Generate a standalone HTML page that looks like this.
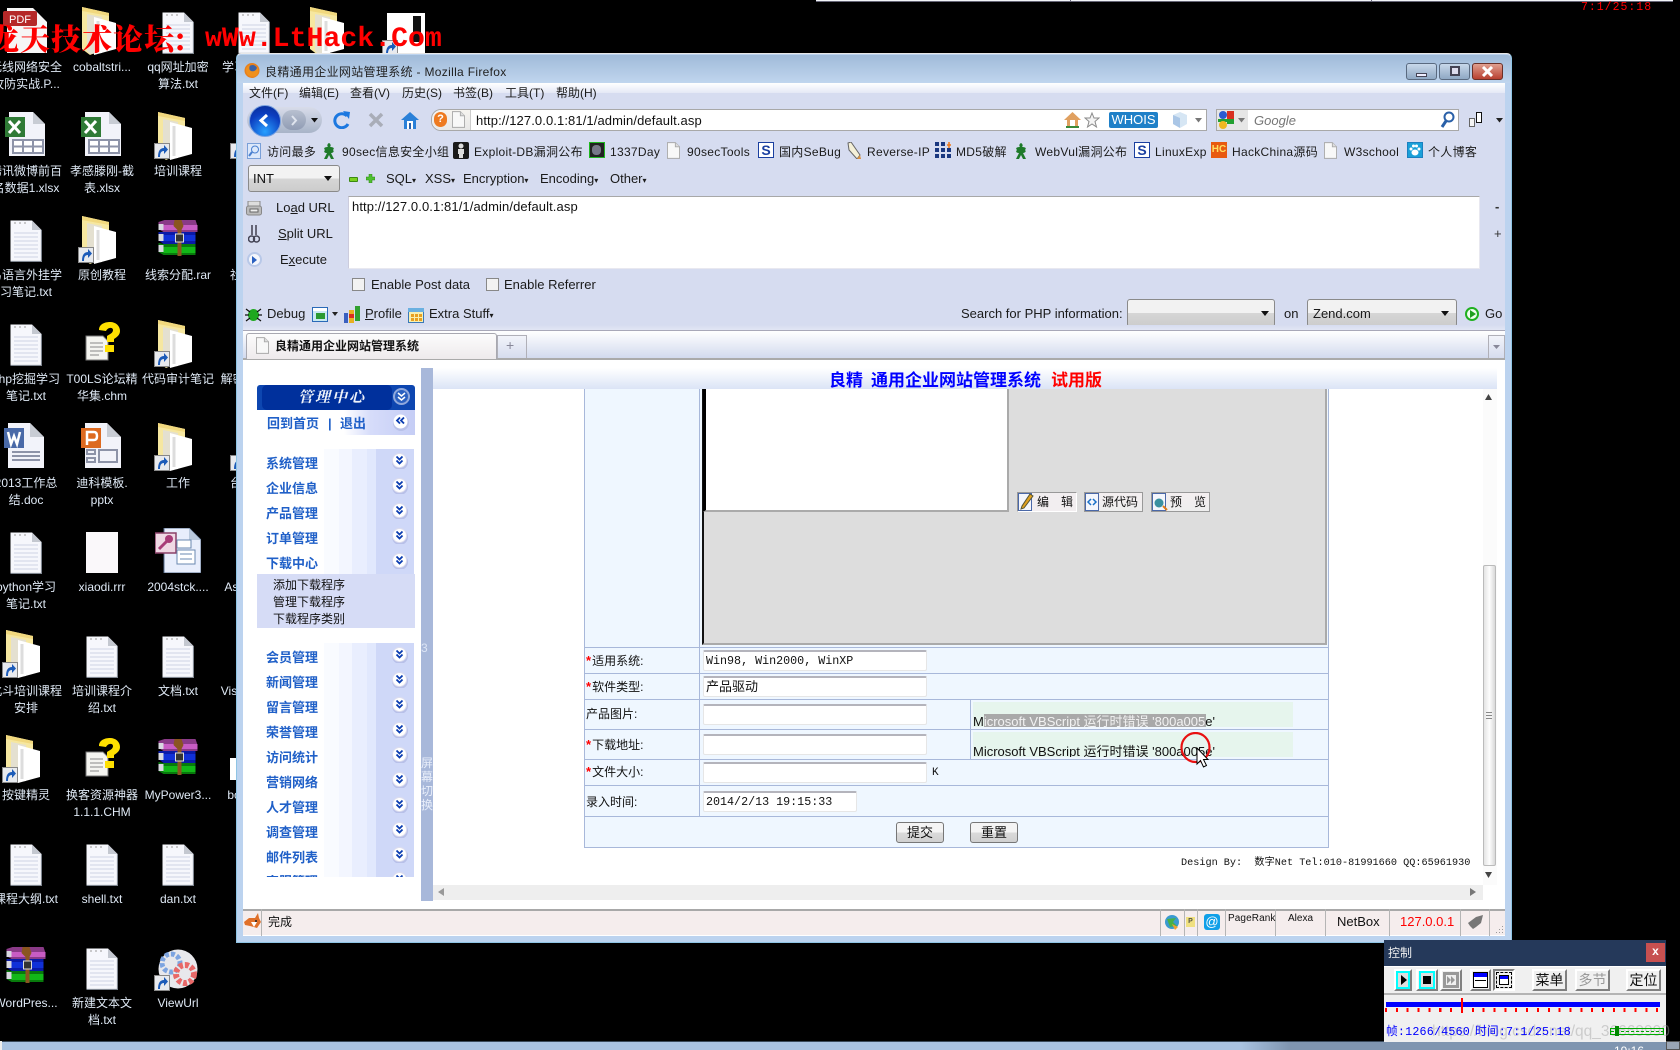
<!DOCTYPE html>
<html><head><meta charset="utf-8"><title>良精通用企业网站管理系统</title>
<style>
*{box-sizing:border-box}
html,body{margin:0;padding:0;background:#000;width:1680px;height:1050px;overflow:hidden}
body{position:relative;font-family:"Liberation Sans","Noto Sans CJK SC",sans-serif;font-size:12px;color:#111}
.a,.t,.i,.l{position:absolute}
.t{white-space:nowrap;line-height:16px}
.l{white-space:nowrap;text-align:center;width:120px;margin-left:-60px;margin-top:1px;line-height:17px;color:#dfe9f5}
.ui{letter-spacing:.3px;color:#1a1a1a}
.m{font-family:"Liberation Mono","Noto Sans CJK SC",monospace}
.side{font-weight:700;font-size:13px;color:#2060c8;line-height:16px;left:266px;margin-top:1px}
.sub{left:273px;line-height:16px;color:#111;margin-top:1px}
.lab{left:586px;line-height:16px;color:#111;margin-top:1px}
.lab b{color:#f00;font-weight:700;font-size:13px;margin-right:1px}
.in{position:absolute;left:703px;width:224px;height:21px;background:#fff;border:1px solid #e6e6e6;border-top:2px solid #b4b4bc;border-radius:2px}
.sel{position:absolute;background:linear-gradient(#f2f2f2 50%,#d6d6d6 50%,#ccc);border:1px solid #8a8a8a;border-radius:3px}
.btn{position:absolute;background:linear-gradient(#f4f4f4 50%,#dadada 50%,#d0d0d0);border:1px solid #777;border-radius:3px;text-align:center;font-size:13px;line-height:19px;color:#111}
.ed{position:absolute;top:492px;height:20px;background:linear-gradient(#f4eff0,#eee);border:1px solid #999;font-size:12px;line-height:19px;color:#111;white-space:pre}
.sep{position:absolute;top:909px;height:27px;width:1px;background:#b5b5b5}
.cb{position:absolute;top:969px;height:22px;background:#f0f0f0;border:2px solid;border-color:#fff #808080 #808080 #fff;text-align:center;font-size:14px;line-height:18px;color:#111}
</style></head><body>

<svg width="0" height="0" style="position:absolute"><defs>
<symbol id="txt" viewBox="0 0 32 42"><path d="M.5.5H22L31.5 10V41.5H.5Z" fill="#f6f7fc"/><path d="M22 .5V10h9.5Z" fill="#c4c8d0"/><path d="M4 13h24M4 17h24M4 21h24M4 25h24M4 29h24M4 33h24M4 37h24" stroke="#cdd3e4"/><path d="M4 3h14" stroke="#999" stroke-dasharray="2 3"/><path d="M.5 41.5H31.5V10" fill="none" stroke="#7f8690" stroke-width="1.2"/></symbol>
<symbol id="fol" viewBox="0 0 34 48"><path d="M0 0L27 6V40L8 48L0 42Z" fill="#f6e7a0"/><path d="M0 0L27 6V9L0 4Z" fill="#f1d87e"/><path d="M5 7L20 10V46L8 47L5 44Z" fill="#e4e0d0"/><path d="M12 10L34 16V42L12 48Z" fill="#fff"/><path d="M16 14V44" stroke="#ddd" stroke-width="3"/></symbol>
<symbol id="sc" viewBox="0 0 16 16"><rect x=".5" y=".5" width="15" height="15" fill="#e8eaee" stroke="#888"/><path d="M4 14C4 8 6 5 10 5V2L14 6.500L10 11V8C7 8 6 10 6 14Z" fill="#1c5bb8"/></symbol>
<symbol id="rar" viewBox="0 0 40 36"><path d="M1 2L7 0H38L40 6V12H6L1 9Z" fill="#8a3a88"/><path d="M6 5H40V10H6Z" fill="#c85cc4"/><path d="M1 12L6 12H38V24H6L1 20Z" fill="#0a1aa8"/><path d="M6 15H38V21H6Z" fill="#1030d8"/><path d="M1 23L6 24H38V35H6L1 32Z" fill="#087a0c"/><path d="M6 27H38V33H6Z" fill="#12b818"/><path d="M1 4H6V10H1ZM1 14H6V21H1ZM1 25H6V32H1Z" fill="#d8d8e0"/><path d="M17 0H24L26 6L24 10V36H20V10L16 6Z" fill="#8a5520"/><rect x="18" y="14" width="8" height="8" fill="#333" stroke="#ddd"/></symbol>
<symbol id="xls" viewBox="0 0 40 44"><path d="M4 0H28L40 12V44H4Z" fill="#f2f3fa"/><path d="M28 0V12H40Z" fill="#c8ccd4"/><rect x="0" y="5" width="20" height="20" fill="#2f7a36"/><path d="M4 9L15 21M15 9L4 21" stroke="#fff" stroke-width="3"/><path d="M8 28H38V41H8Z" fill="#fff" stroke="#8d93a8" stroke-width="2"/><path d="M8 34.500H38M18 28V41M28 28V41" stroke="#8d93a8" stroke-width="2"/></symbol>
<symbol id="chm" viewBox="0 0 35 39"><path d="M1 14H18L23 19V38H1Z" fill="#f4f4f0" stroke="#777"/><path d="M5 21H18M5 25H18M5 29H18M5 33H14" stroke="#888"/><path d="M14 8C14 2 20 0 25 0C31 0 35 4 35 9C35 13 32 15 29 17V20H22V14C25 12 28 11 28 8C28 5 23 5 21 9Z" fill="#ffe000"/><rect x="20" y="23" width="9" height="7" fill="#ffe000"/></symbol>
<symbol id="doc" viewBox="0 0 40 45"><path d="M4 0H26L40 14V45H4Z" fill="#f2f3fa"/><path d="M26 0V14H40Z" fill="#c8ccd4"/><rect y="5" width="20" height="20" fill="#4a6aa8"/><path d="M4 9L7 21L10 13L13 21L16 9" fill="none" stroke="#fff" stroke-width="2.500"/><path d="M8 29H36M8 33H36M8 37H36" stroke="#8d93a8" stroke-width="2"/></symbol>
<symbol id="ppt" viewBox="0 0 40 45"><path d="M4 0H26L40 14V45H4Z" fill="#f2f3fa"/><path d="M26 0V14H40Z" fill="#c8ccd4"/><rect y="5" width="20" height="20" fill="#dd6a20"/><path d="M6 22V9H13Q16 9 16 13T13 17H6" fill="none" stroke="#fff" stroke-width="2.500"/><path d="M6 27H14V31H6ZM6 35H14V39H6ZM18 27H36V39H18Z" fill="none" stroke="#8d93a8" stroke-width="2"/></symbol>
<symbol id="mdb" viewBox="0 0 46 45"><path d="M9 0H34L46 12V45H9Z" fill="#e8eefc" stroke="#5a7090"/><path d="M34 0V12H46Z" fill="#b8c8dc"/><rect x="0" y="5" width="21" height="20" fill="#efd8e4" stroke="#8a4068" stroke-width="1.500"/><circle cx="14" cy="11" r="4" fill="#a83c78"/><path d="M12 13L4 21" stroke="#a83c78" stroke-width="3"/><path d="M22 12H36V20H22ZM22 22H40V36H22Z" fill="#fff" stroke="#6a88b0"/><path d="M25 26H37M25 31H37" stroke="#6a88b0"/></symbol>
<symbol id="view" viewBox="0 0 40 44"><circle cx="20" cy="22" r="19.500" fill="#e8e8ec"/><circle cx="13" cy="16" r="9" fill="none" stroke="#7da4e0" stroke-width="5" stroke-dasharray="4 2"/><circle cx="27" cy="27" r="9" fill="none" stroke="#e86868" stroke-width="6" stroke-dasharray="4 2"/></symbol>
<symbol id="chev" viewBox="0 -1 17 17" overflow="visible"><circle cx="8" cy="9" r="8" fill="#b8c0e8"/><circle cx="7.500" cy="7.500" r="7" fill="#fff" stroke="#dde"/><path d="M4.500 3.500L7.500 6.500L10.500 3.500M4.500 7.500L7.500 10.500L10.500 7.500" fill="none" stroke="#0a3cb0" stroke-width="1.800"/></symbol>
<symbol id="gf" viewBox="0 0 14 16"><path d="M7 0C9 1 9 3 8 4C11 4 13 5 11 7C13 9 10 10 9 10C10 12 11 14 12 16H9L7 12L5 16H2C3 14 4 12 5 10C3 10 1 9 3 7C1 5 3 4 6 4C5 3 5 1 7 0Z" fill="#1e7a2a"/></symbol>
<symbol id="pg" viewBox="0 0 14 18"><path d="M.5.5H9L13.500 5V17.500H.5Z" fill="#f8f8f8" stroke="#aaa"/><path d="M9 .5V5H13.500" fill="#ddd" stroke="#aaa"/></symbol>
<symbol id="ss" viewBox="0 0 16 16"><rect x=".5" y=".5" width="15" height="15" fill="#fff" stroke="#1a3fa0"/></symbol>
</defs></svg>

<!-- top strip -->
<div class="a" style="left:816px;top:0;width:857px;height:2px;background:#f2f4f8;border-bottom:1px solid #667"></div>
<div class="a" style="left:1070px;top:0;width:1px;height:2px;background:#667"></div>
<div class="a" style="left:1371px;top:0;width:1px;height:2px;background:#667"></div>
<div class="t m" style="left:1581px;top:0;color:#f00;font-size:11.500px;letter-spacing:1px">7:1/25:18</div>

<!-- desktop icons -->
<svg class="i" style="left:3px;top:8px" width="44" height="45" viewBox="0 0 44 45"><path d="M4 0H30L44 14V45H4Z" fill="#f6f6f6"/><rect x="0" y="3" width="34" height="15" rx="2" fill="#b52828"/><text x="17" y="15" font-size="11" fill="#fff" text-anchor="middle" font-family="Liberation Sans">PDF</text></svg>
<svg class="i" style="left:82px;top:7px" width="34" height="48"><use href="#fol"/></svg>
<svg class="i" style="left:162px;top:12px" width="32" height="42"><use href="#txt"/></svg>
<svg class="i" style="left:238px;top:12px" width="32" height="42"><use href="#txt"/></svg>
<svg class="i" style="left:310px;top:7px" width="34" height="48"><use href="#fol"/></svg>
<div class="a" style="left:387px;top:13px;width:38px;height:40px;background:#fff"></div>
<div class="a" style="left:413px;top:16px;width:8px;height:26px;background:#111"></div>
<svg class="i" style="left:382px;top:40px" width="16" height="16"><use href="#sc"/></svg>

<svg class="i" style="left:5px;top:112px" width="40" height="44"><use href="#xls"/></svg>
<svg class="i" style="left:81px;top:112px" width="40" height="44"><use href="#xls"/></svg>
<svg class="i" style="left:158px;top:112px" width="34" height="48"><use href="#fol"/></svg>
<svg class="i" style="left:154px;top:143px" width="16" height="16"><use href="#sc"/></svg>
<svg class="i" style="left:230px;top:143px" width="16" height="16"><use href="#sc"/></svg>

<svg class="i" style="left:10px;top:220px" width="32" height="42"><use href="#txt"/></svg>
<svg class="i" style="left:82px;top:216px" width="34" height="48"><use href="#fol"/></svg>
<svg class="i" style="left:78px;top:247px" width="16" height="16"><use href="#sc"/></svg>
<svg class="i" style="left:157px;top:220px" width="41" height="36"><use href="#rar"/></svg>

<svg class="i" style="left:10px;top:324px" width="32" height="42"><use href="#txt"/></svg>
<svg class="i" style="left:85px;top:322px" width="35" height="39"><use href="#chm"/></svg>
<svg class="i" style="left:158px;top:320px" width="34" height="48"><use href="#fol"/></svg>
<svg class="i" style="left:154px;top:351px" width="16" height="16"><use href="#sc"/></svg>

<svg class="i" style="left:4px;top:423px" width="40" height="45"><use href="#doc"/></svg>
<svg class="i" style="left:81px;top:423px" width="40" height="45"><use href="#ppt"/></svg>
<svg class="i" style="left:158px;top:423px" width="34" height="48"><use href="#fol"/></svg>
<svg class="i" style="left:154px;top:455px" width="16" height="16"><use href="#sc"/></svg>
<svg class="i" style="left:230px;top:455px" width="16" height="16"><use href="#sc"/></svg>

<svg class="i" style="left:10px;top:532px" width="32" height="42"><use href="#txt"/></svg>
<div class="a" style="left:86px;top:532px;width:32px;height:41px;background:#faf8fa"></div>
<svg class="i" style="left:155px;top:528px" width="46" height="45"><use href="#mdb"/></svg>

<svg class="i" style="left:6px;top:630px" width="34" height="48"><use href="#fol"/></svg>
<svg class="i" style="left:2px;top:662px" width="16" height="16"><use href="#sc"/></svg>
<svg class="i" style="left:86px;top:636px" width="32" height="42"><use href="#txt"/></svg>
<svg class="i" style="left:162px;top:636px" width="32" height="42"><use href="#txt"/></svg>

<svg class="i" style="left:6px;top:735px" width="34" height="48"><use href="#fol"/></svg>
<svg class="i" style="left:2px;top:767px" width="16" height="16"><use href="#sc"/></svg>
<svg class="i" style="left:85px;top:738px" width="35" height="39"><use href="#chm"/></svg>
<svg class="i" style="left:157px;top:739px" width="41" height="36"><use href="#rar"/></svg>
<div class="a" style="left:230px;top:758px;width:6px;height:22px;background:#fff"></div>

<svg class="i" style="left:10px;top:844px" width="32" height="42"><use href="#txt"/></svg>
<svg class="i" style="left:86px;top:844px" width="32" height="42"><use href="#txt"/></svg>
<svg class="i" style="left:162px;top:844px" width="32" height="42"><use href="#txt"/></svg>

<svg class="i" style="left:5px;top:947px" width="41" height="36"><use href="#rar"/></svg>
<svg class="i" style="left:86px;top:948px" width="32" height="42"><use href="#txt"/></svg>
<svg class="i" style="left:158px;top:947px" width="40" height="44"><use href="#view"/></svg>
<svg class="i" style="left:154px;top:975px" width="16" height="16"><use href="#sc"/></svg>

<!-- desktop labels -->
<div class="l" style="left:26px;top:58px">无线网络安全<br>攻防实战.P...</div>
<div class="l" style="left:102px;top:58px">cobaltstri...</div>
<div class="l" style="left:178px;top:58px">qq网址加密<br>算法.txt</div>
<div class="l" style="left:254px;top:58px">学习资料.txt</div>
<div class="l" style="left:26px;top:162px">腾讯微博前百<br>名数据1.xlsx</div>
<div class="l" style="left:102px;top:162px">孝感滕刚-截<br>表.xlsx</div>
<div class="l" style="left:178px;top:162px">培训课程</div>
<div class="l" style="left:26px;top:266px">易语言外挂学<br>习笔记.txt</div>
<div class="l" style="left:102px;top:266px">原创教程</div>
<div class="l" style="left:178px;top:266px">线索分配.rar</div>
<div class="l" style="left:254px;top:266px">社工工具</div>
<div class="l" style="left:26px;top:370px">php挖掘学习<br>笔记.txt</div>
<div class="l" style="left:102px;top:370px">T00LS论坛精<br>华集.chm</div>
<div class="l" style="left:178px;top:370px">代码审计笔记</div>
<div class="l" style="left:254px;top:370px">解密工具书..</div>
<div class="l" style="left:26px;top:474px">2013工作总<br>结.doc</div>
<div class="l" style="left:102px;top:474px">迪科模板.<br>pptx</div>
<div class="l" style="left:178px;top:474px">工作</div>
<div class="l" style="left:254px;top:474px">台账资料</div>
<div class="l" style="left:26px;top:578px">python学习<br>笔记.txt</div>
<div class="l" style="left:102px;top:578px">xiaodi.rrr</div>
<div class="l" style="left:178px;top:578px">2004stck....</div>
<div class="l" style="left:254px;top:578px">Astrology...</div>
<div class="l" style="left:26px;top:682px">北斗培训课程<br>安排</div>
<div class="l" style="left:102px;top:682px">培训课程介<br>绍.txt</div>
<div class="l" style="left:178px;top:682px">文档.txt</div>
<div class="l" style="left:254px;top:682px">VisualStudio</div>
<div class="l" style="left:26px;top:786px">按键精灵</div>
<div class="l" style="left:102px;top:786px">换客资源神器<br>1.1.1.CHM</div>
<div class="l" style="left:178px;top:786px">MyPower3...</div>
<div class="l" style="left:254px;top:786px">bootmgr...</div>
<div class="l" style="left:26px;top:890px">课程大纲.txt</div>
<div class="l" style="left:102px;top:890px">shell.txt</div>
<div class="l" style="left:178px;top:890px">dan.txt</div>
<div class="l" style="left:26px;top:994px">WordPres...</div>
<div class="l" style="left:102px;top:994px">新建文本文<br>档.txt</div>
<div class="l" style="left:178px;top:994px">ViewUrl</div>

<!-- red overlay -->
<div class="t" style="left:-11px;top:19px;font-family:'Noto Serif CJK SC',serif;font-weight:900;font-size:30px;line-height:36px;letter-spacing:1px;color:#f00;z-index:5">龙天技术论坛:</div>
<div class="t" style="left:205px;top:20px;font-family:'Liberation Mono',monospace;font-weight:700;font-size:28.200px;line-height:40px;color:#f00;z-index:5">wWw.LtHack.Com</div>

<!-- ===== FIREFOX WINDOW ===== -->
<div class="a" style="left:236px;top:53px;width:1276px;height:890px;background:#bcd3ef;border:1px solid #8fc4e4;border-top-color:#e8e8e8;border-radius:5px 5px 0 0"></div>
<div class="a" style="left:237px;top:55px;width:1274px;height:28px;background:linear-gradient(#a0bbd9,#c0d5ee);border-radius:4px 4px 0 0"></div>
<svg class="i" style="left:244px;top:62px" width="16" height="17" viewBox="0 0 16 17"><circle cx="8" cy="8.500" r="7.500" fill="#e8801c"/><circle cx="8.500" cy="8" r="5" fill="#3a62a8"/><path d="M2 8C2 14 8 16 12 14C15 12 15 8 13 5C13 8 10 10 7 9C5 8 5 6 6 3C3 4 2 6 2 8Z" fill="#f0901c"/></svg>
<div class="t" style="left:265px;top:64px;font-size:12px;letter-spacing:.32px;color:#222">良精通用企业网站管理系统 - Mozilla Firefox</div>
<!-- win buttons -->
<div class="a" style="left:1406px;top:63px;width:31px;height:17px;background:linear-gradient(#c8d8ea,#8fa8c4);border:1px solid #5a6a80;border-radius:3px"></div>
<div class="a" style="left:1416px;top:73px;width:11px;height:4px;background:#eef;border:1px solid #445"></div>
<div class="a" style="left:1439px;top:63px;width:31px;height:17px;background:linear-gradient(#c8d8ea,#8fa8c4);border:1px solid #5a6a80;border-radius:3px"></div>
<div class="a" style="left:1450px;top:66px;width:10px;height:10px;background:#dde;border:2px solid #445"></div>
<div class="a" style="left:1472px;top:63px;width:31px;height:17px;background:linear-gradient(#e0a090,#b84030);border:1px solid #6a3028;border-radius:3px"></div>
<svg class="i" style="left:1481px;top:66px" width="13" height="11"><path d="M2 1L11 10M11 1L2 10" stroke="#fff" stroke-width="3"/></svg>

<!-- chrome body -->
<div class="a" style="left:243px;top:83px;width:1262px;height:247px;background:#d6dcf0"></div>
<div class="a" style="left:243px;top:83px;width:1262px;height:10px;background:linear-gradient(#fff,#e4e8f6)"></div>
<div class="t" style="left:249px;top:85px;color:#1a1a1a">文件(F)</div>
<div class="t" style="left:299px;top:85px;color:#1a1a1a">编辑(E)</div>
<div class="t" style="left:350px;top:85px;color:#1a1a1a">查看(V)</div>
<div class="t" style="left:402px;top:85px;color:#1a1a1a">历史(S)</div>
<div class="t" style="left:453px;top:85px;color:#1a1a1a">书签(B)</div>
<div class="t" style="left:505px;top:85px;color:#1a1a1a">工具(T)</div>
<div class="t" style="left:556px;top:85px;color:#1a1a1a">帮助(H)</div>

<!-- nav -->
<div class="a" style="left:247px;top:107px;width:75px;height:26px;background:linear-gradient(#d8dcea,#a8b4c8);border-radius:13px"></div>
<div class="a" style="left:282px;top:110px;width:24px;height:20px;background:linear-gradient(#b8c0d0,#909cb4);border-radius:10px"></div>
<div class="a" style="left:249px;top:105px;width:32px;height:32px;border-radius:50%;background:radial-gradient(circle at 50% 85%,#28a0ff,#0c3ec0 60%,#082a90);border:1px solid #7aa2e0"></div>
<svg class="i" style="left:257px;top:113px" width="15" height="15"><path d="M10 2L4 7.500L10 13" fill="none" stroke="#fff" stroke-width="3"/></svg>
<svg class="i" style="left:289px;top:114px" width="10" height="13"><path d="M3 2L7 6.500L3 11" fill="none" stroke="#dfe4ee" stroke-width="2"/></svg>
<svg class="i" style="left:311px;top:118px" width="7" height="5"><path d="M0 0H7L3.500 4.500Z" fill="#111"/></svg>
<svg class="i" style="left:333px;top:111px" width="18" height="18" viewBox="0 0 18 18"><path d="M14 5A7 7 0 1 0 15 13" fill="none" stroke="#1c78e0" stroke-width="3"/><path d="M10 0L17 1L16 8Z" fill="#1c78e0"/></svg>
<svg class="i" style="left:368px;top:112px" width="16" height="16"><path d="M2 2L14 14M14 2L2 14" stroke="#a9adb8" stroke-width="3.500"/></svg>
<svg class="i" style="left:401px;top:112px" width="18" height="17" viewBox="0 0 18 17"><path d="M9 0L18 8H15V17H3V8H0Z" fill="#2a80d8"/><rect x="6" y="9" width="6" height="8" fill="#fff"/><rect x="8" y="11" width="2" height="6" fill="#2a60a8"/></svg>
<div class="a" style="left:431px;top:109px;width:776px;height:22px;background:#fff;border:1px solid #a8a8a8;border-radius:10px 0 0 10px"></div>
<div class="a" style="left:432px;top:110px;width:39px;height:20px;background:linear-gradient(#f6f4f0,#e8e8e8);border-radius:10px 0 0 10px;border-right:1px solid #ccc"></div>
<div class="t" style="left:434px;top:112px;width:13px;height:15px;line-height:15px;background:#ee7a20;border-radius:7px;color:#fff;font-weight:700;font-size:11px;text-align:center">?</div>
<svg class="i" style="left:452px;top:111px" width="13" height="17"><use href="#pg"/></svg>
<div class="t" style="left:476px;top:113px;font-size:13px;letter-spacing:.1px;color:#111">http://127.0.0.1:81/1/admin/default.asp</div>
<svg class="i" style="left:1064px;top:112px" width="17" height="16" viewBox="0 0 17 16"><path d="M8.500 0L17 8H14V15H3V8H0Z" fill="#e0a060"/><rect x="6" y="8" width="5" height="7" fill="#fff"/><rect x="2" y="14" width="13" height="2" fill="#3a8a3a"/></svg>
<svg class="i" style="left:1084px;top:112px" width="16" height="16" viewBox="0 0 16 16"><path d="M8 1L10 6H15L11 9.500L12.500 15L8 12L3.500 15L5 9.500L1 6H6Z" fill="#f4f4f4" stroke="#8a8a8a"/></svg>
<div class="t" style="left:1109px;top:112px;width:49px;height:16px;background:#1f80c8;color:#fff;border-radius:2px;text-align:center;font-weight:400;font-size:13px;line-height:16px">WHOIS</div>
<svg class="i" style="left:1173px;top:112px" width="14" height="16" viewBox="0 0 14 16"><path d="M7 0L14 3V12L7 16L0 12V3Z" fill="#d6e6f4"/><path d="M0 3L7 6V16L0 12Z" fill="#aac6e6"/></svg>
<svg class="i" style="left:1195px;top:118px" width="7" height="5"><path d="M0 0H7L3.500 4.500Z" fill="#777"/></svg>

<div class="a" style="left:1216px;top:109px;width:243px;height:22px;background:#fff;border:1px solid #a8a8a8"></div>
<div class="a" style="left:1217px;top:110px;width:31px;height:20px;background:#e6e6e6"></div>
<svg class="i" style="left:1218px;top:111px" width="17" height="18" viewBox="0 0 17 18"><rect width="17" height="18" rx="2" fill="#e6e6e6"/><circle cx="5" cy="4" r="4" fill="#2a5ad0"/><path d="M9 0H16V9H9Z" fill="#d83020"/><path d="M0 8H9V11H0ZM9 8H16V13H9Z" fill="#22a030"/><circle cx="5" cy="14" r="4" fill="#f0b820"/></svg>
<svg class="i" style="left:1238px;top:118px" width="7" height="5"><path d="M0 0H7L3.500 4.500Z" fill="#777"/></svg>
<div class="t" style="left:1254px;top:113px;font-size:13px;font-style:italic;color:#777">Google</div>
<svg class="i" style="left:1440px;top:111px" width="15" height="18" viewBox="0 0 15 18"><circle cx="9" cy="6" r="4.500" fill="none" stroke="#2a60a8" stroke-width="2"/><path d="M6 10L2 16" stroke="#2a60a8" stroke-width="3"/></svg>
<svg class="i" style="left:1469px;top:112px" width="15" height="15"><rect x=".5" y="6.500" width="5" height="8" fill="#f4f4f4" stroke="#666"/><rect x="7.500" y=".5" width="5" height="10" fill="#fff" stroke="#111"/></svg>
<svg class="i" style="left:1496px;top:118px" width="7" height="5"><path d="M0 0H7L3.500 4.500Z" fill="#222"/></svg>

<!-- bookmarks -->
<svg class="i" style="left:247px;top:143px" width="14" height="16"><rect x=".5" y=".5" width="13" height="15" fill="#dce8fa" stroke="#7aa0d8"/><circle cx="8" cy="6.500" r="3.500" fill="none" stroke="#4a80d0"/><path d="M5 9L2 13" stroke="#4a80d0" stroke-width="2"/></svg>
<div class="t ui" style="left:267px;top:144px">访问最多</div>
<svg class="i" style="left:322px;top:143px" width="14" height="16"><use href="#gf"/></svg>
<div class="t ui" style="left:342px;top:144px">90sec信息安全小组</div>
<div class="a" style="left:453px;top:142px;width:16px;height:17px;background:#1a1a1a;border-radius:2px"></div>
<svg class="i" style="left:455px;top:143px" width="12" height="15"><circle cx="6" cy="3" r="2.500" fill="#ddd"/><path d="M3 6H9V11H8V15H4V11H3Z" fill="#ddd"/></svg>
<div class="t ui" style="left:474px;top:144px">Exploit-DB漏洞公布</div>
<div class="a" style="left:589px;top:142px;width:16px;height:16px;background:#222;border:1px solid #1fb81f"></div>
<div class="a" style="left:592px;top:145px;width:9px;height:10px;background:#778;border-radius:4px"></div>
<div class="t ui" style="left:610px;top:144px">1337Day</div>
<svg class="i" style="left:667px;top:142px" width="13" height="17"><use href="#pg"/></svg>
<div class="t ui" style="left:687px;top:144px">90secTools</div>
<svg class="i" style="left:758px;top:142px" width="16" height="16"><use href="#ss"/></svg>
<div class="t" style="left:758px;top:142px;width:16px;text-align:center;font-weight:700;font-size:14px;color:#1a3fa0">S</div>
<div class="t ui" style="left:779px;top:144px">国内SeBug</div>
<svg class="i" style="left:846px;top:142px" width="15" height="17" viewBox="0 0 15 17"><path d="M2 1L5 0L14 13L11 17L3 8Z" fill="#f4f0d8" stroke="#666"/><path d="M11 17L14 13L15 17Z" fill="#d89040"/></svg>
<div class="t ui" style="left:867px;top:144px">Reverse-IP</div>
<svg class="i" style="left:935px;top:142px" width="16" height="16" viewBox="0 0 16 16"><path d="M0 0h4v4H0zM6 0h4v4H6zM0 6h4v4H0zM6 6h4v4H6zM12 6h4v4h-4zM0 12h4v4H0zM6 12h4v4H6zM12 12h4v4h-4z" fill="#1a3880"/><path d="M12 3h4M14 0v6" stroke="#f07a18" stroke-width="1.500"/></svg>
<div class="t ui" style="left:956px;top:144px">MD5破解</div>
<svg class="i" style="left:1014px;top:143px" width="14" height="16"><use href="#gf"/></svg>
<div class="t ui" style="left:1035px;top:144px">WebVul漏洞公布</div>
<svg class="i" style="left:1134px;top:142px" width="16" height="16"><use href="#ss"/></svg>
<div class="t" style="left:1134px;top:142px;width:16px;text-align:center;font-weight:700;font-size:14px;color:#1a3fa0">S</div>
<div class="t ui" style="left:1155px;top:144px">LinuxExp</div>
<div class="t" style="left:1211px;top:142px;width:16px;height:16px;background:#e85a10;color:#ffe060;font-weight:700;font-size:10px;text-align:center">HC</div>
<div class="t ui" style="left:1232px;top:144px">HackChina源码</div>
<svg class="i" style="left:1324px;top:142px" width="13" height="17"><use href="#pg"/></svg>
<div class="t ui" style="left:1344px;top:144px">W3school</div>
<div class="a" style="left:1407px;top:142px;width:16px;height:16px;background:#1aa0d8;border:1px solid #1a80c0"></div>
<svg class="i" style="left:1409px;top:144px" width="12" height="12" viewBox="0 0 12 12"><ellipse cx="6" cy="8.500" rx="3.500" ry="3" fill="#fff"/><circle cx="2" cy="5" r="1.500" fill="#fff"/><circle cx="10" cy="5" r="1.500" fill="#fff"/><circle cx="4.500" cy="2" r="1.500" fill="#fff"/><circle cx="7.500" cy="2" r="1.500" fill="#fff"/></svg>
<div class="t ui" style="left:1428px;top:144px">个人博客</div>

<!-- hackbar -->
<div class="sel" style="left:248px;top:165px;width:92px;height:27px"></div>
<div class="t" style="left:253px;top:171px;font-size:13px;color:#111">INT</div>
<svg class="i" style="left:324px;top:176px" width="8" height="5"><path d="M0 0H8L4 5Z" fill="#111"/></svg>
<div class="a" style="left:349px;top:177px;width:9px;height:5px;background:#7ad020;border:1px solid #3a8a10;border-radius:1px"></div>
<svg class="i" style="left:366px;top:174px" width="9" height="9"><path d="M3 0H6V3H9V6H6V9H3V6H0V3H3Z" fill="#4ec030" stroke="#2a8010" stroke-width=".5"/></svg>
<div class="t ui" style="left:386px;top:171px;font-size:13px;letter-spacing:0">SQL<span style="font-size:8px">▾</span></div>
<div class="t ui" style="left:425px;top:171px;font-size:13px;letter-spacing:0">XSS<span style="font-size:8px">▾</span></div>
<div class="t ui" style="left:463px;top:171px;font-size:13px;letter-spacing:0">Encryption<span style="font-size:8px">▾</span></div>
<div class="t ui" style="left:540px;top:171px;font-size:13px;letter-spacing:0">Encoding<span style="font-size:8px">▾</span></div>
<div class="t ui" style="left:610px;top:171px;font-size:13px;letter-spacing:0">Other<span style="font-size:8px">▾</span></div>

<div class="a" style="left:348px;top:196px;width:1132px;height:73px;background:#fff;border-top:1px solid #a8a8a8;border-left:1px solid #ccd;border-right:1px solid #e8e8f0;border-bottom:1px solid #e8e8f0"></div>
<div class="t" style="left:352px;top:199px;font-size:13px;letter-spacing:.1px;color:#111">http://127.0.0.1:81/1/admin/default.asp</div>
<svg class="i" style="left:246px;top:201px" width="16" height="15" viewBox="0 0 16 15"><rect x="2" y="0" width="12" height="6" fill="#ddd" stroke="#888"/><rect x=".5" y="5" width="15" height="9" rx="2" fill="#bbb" stroke="#888"/><rect x="4" y="8" width="8" height="3" fill="#eee" stroke="#666"/></svg>
<svg class="i" style="left:248px;top:224px" width="12" height="19" viewBox="0 0 12 19"><path d="M4 1V11M8 1V11" stroke="#667" stroke-width="2"/><circle cx="3.500" cy="15" r="3" fill="none" stroke="#445" stroke-width="1.500"/><circle cx="8.500" cy="15" r="3" fill="none" stroke="#445" stroke-width="1.500"/></svg>
<div class="a" style="left:247px;top:252px;width:15px;height:15px;background:#f4f6fc;border:2px solid #b8c8e8;border-radius:50%"></div>
<svg class="i" style="left:252px;top:256px" width="6" height="8"><path d="M0 0L5 4L0 8Z" fill="#2a60c0"/></svg>
<div class="t ui" style="left:276px;top:200px;font-size:13px;letter-spacing:0">Lo<u>a</u>d URL</div>
<div class="t ui" style="left:278px;top:226px;font-size:13px;letter-spacing:0"><u>S</u>plit URL</div>
<div class="t ui" style="left:280px;top:252px;font-size:13px;letter-spacing:0">E<u>x</u>ecute</div>
<div class="t" style="left:1495px;top:199px;font-size:13px;font-weight:700;color:#333">-</div>
<div class="t" style="left:1494px;top:226px;font-size:13px;color:#333">+</div>
<div class="a" style="left:352px;top:278px;width:13px;height:13px;background:#f2f2f2;border:1px solid #888"></div>
<div class="t ui" style="left:371px;top:277px;font-size:13px;letter-spacing:0">Enable Post data</div>
<div class="a" style="left:486px;top:278px;width:13px;height:13px;background:#f2f2f2;border:1px solid #888"></div>
<div class="t ui" style="left:504px;top:277px;font-size:13px;letter-spacing:0">Enable Referrer</div>

<svg class="i" style="left:245px;top:306px" width="17" height="16" viewBox="0 0 17 16"><ellipse cx="8.500" cy="9" rx="5.500" ry="6" fill="#1fa81f"/><path d="M1 3L5 6M16 3L12 6M0 9H4M17 9H13M1 15L5 12M16 15L12 12" stroke="#111" stroke-width="1.200"/></svg>
<div class="t ui" style="left:267px;top:306px;font-size:13px;letter-spacing:0">Debu<u>g</u></div>
<div class="a" style="left:312px;top:307px;width:16px;height:15px;background:linear-gradient(#fff 25%,#c8e8f0 25%);border:1px solid #2a6ab8"></div>
<div class="a" style="left:316px;top:313px;width:9px;height:6px;background:#2a9a30"></div>
<svg class="i" style="left:332px;top:312px" width="6" height="4"><path d="M0 0H6L3 4Z" fill="#222"/></svg>
<svg class="i" style="left:344px;top:306px" width="16" height="17" viewBox="0 0 16 17"><path d="M0 7H4V17H0Z" fill="#3a60c0"/><path d="M5 4H10V17H5Z" fill="#e8b020"/><path d="M11 0H16V15H11Z" fill="#30a030"/><path d="M5 8H10V12H5Z" fill="#d83020"/></svg>
<div class="t ui" style="left:365px;top:306px;font-size:13px;letter-spacing:0"><u>P</u>rofile</div>
<svg class="i" style="left:408px;top:306px" width="16" height="17" viewBox="0 0 16 17"><rect x=".5" y="2.500" width="15" height="14" fill="#f8f0b0" stroke="#3a78b8"/><rect x="0" y="2" width="16" height="4" fill="#6ab0e0"/><path d="M3 8h3v3H3zM7 8h3v3H7zM11 8h3v3h-3zM3 12h3v3H3zM7 12h3v3H7zM11 12h3v3h-3z" fill="#e8a020"/></svg>
<div class="t ui" style="left:429px;top:306px;font-size:13px;letter-spacing:0">Extra Stuff<span style="font-size:8px">▾</span></div>
<div class="t ui" style="left:961px;top:306px;font-size:13px;letter-spacing:0">Search for PHP information:</div>
<div class="sel" style="left:1127px;top:299px;width:148px;height:28px"></div>
<svg class="i" style="left:1261px;top:311px" width="8" height="5"><path d="M0 0H8L4 5Z" fill="#111"/></svg>
<div class="t ui" style="left:1284px;top:306px;font-size:13px;letter-spacing:0">on</div>
<div class="sel" style="left:1307px;top:299px;width:150px;height:28px"></div>
<div class="t ui" style="left:1313px;top:306px;font-size:13px;letter-spacing:0">Zend.com</div>
<svg class="i" style="left:1441px;top:311px" width="8" height="5"><path d="M0 0H8L4 5Z" fill="#111"/></svg>
<div class="a" style="left:1465px;top:307px;width:14px;height:14px;border-radius:50%;background:#f0fff0;border:2px solid #20b020"></div>
<svg class="i" style="left:1470px;top:310px" width="6" height="8"><path d="M0 0L6 4L0 8Z" fill="#20a020"/></svg>
<div class="t ui" style="left:1485px;top:306px;font-size:13px;letter-spacing:0">Go</div>

<!-- tab bar -->
<div class="a" style="left:243px;top:325px;width:1262px;height:5px;background:linear-gradient(#d6dcf0,#e2e6f4)"></div>
<div class="a" style="left:243px;top:330px;width:1262px;height:30px;background:linear-gradient(#fff,#d2daee);border-top:1px solid #a8a8b8;border-bottom:2px solid #aaa"></div>
<div class="a" style="left:246px;top:333px;width:251px;height:26px;background:linear-gradient(#fcfcfc,#eeeaec);border:1px solid #a8a8b0;border-bottom:0;border-radius:3px 3px 0 0"></div>
<svg class="i" style="left:256px;top:337px" width="13" height="17"><use href="#pg"/></svg>
<div class="t" style="left:275px;top:338px;font-weight:700;color:#111">良精通用企业网站管理系统</div>
<div class="a" style="left:497px;top:335px;width:30px;height:23px;background:linear-gradient(#f2f4fa,#d6dcee);border:1px solid #b0b0b8;border-bottom:0"></div>
<div class="t" style="left:506px;top:337px;font-size:14px;color:#889">+</div>
<div class="a" style="left:1488px;top:335px;width:17px;height:23px;background:linear-gradient(#f2f4fa,#d6dcee);border:1px solid #b0b0b8;border-bottom:0"></div>
<svg class="i" style="left:1493px;top:345px" width="7" height="4"><path d="M0 0H7L3.500 4Z" fill="#889"/></svg>

<!-- content -->
<div class="a" style="left:243px;top:360px;width:1262px;height:549px;background:#fff"></div>
<!-- splitter -->
<div class="a" style="left:421px;top:368px;width:12px;height:533px;background:#a8b8da"></div>
<div class="t" style="left:421px;top:640px;font-size:12px;color:#dce4f4">3</div>
<div class="t" style="left:421px;top:756px;font-size:12px;line-height:14px;color:#e8eefa;white-space:normal;width:12px">屏幕切换</div>
<!-- banner -->
<div class="a" style="left:433px;top:368px;width:1064px;height:21px;background:linear-gradient(#fff,#dbe4f6)"></div>
<div class="t" style="left:829px;top:372px;font-size:17px;font-weight:700;color:#00f;line-height:18px;z-index:2">良精</div>
<div class="t" style="left:871px;top:372px;font-size:17px;font-weight:700;color:#00f;line-height:18px;z-index:2">通用企业网站管理系统</div>
<div class="t" style="left:1051px;top:372px;font-size:17px;font-weight:700;color:#f00;line-height:18px;z-index:2">试用版</div>

<!-- sidebar -->
<div class="a" style="left:257px;top:385px;width:158px;height:25px;background:#0d46b0;border-radius:3px 3px 0 0"></div>
<div class="a" style="left:262px;top:385px;width:130px;height:25px;background:#00309c;border-radius:5px"></div>
<div class="t" style="left:298px;top:388px;font-size:15px;font-weight:700;font-style:italic;color:#eef2fa;line-height:18px;letter-spacing:2px;font-family:'Noto Serif CJK SC',serif">管理中心</div>
<div class="a" style="left:393px;top:388px;width:17px;height:17px;border-radius:50%;background:#2a60c0;border:2px solid #8fa8dc"></div>
<svg class="i" style="left:397px;top:392px" width="9" height="9"><path d="M1 1L4.500 4L8 1M1 5L4.500 8L8 5" fill="none" stroke="#fff" stroke-width="1.500"/></svg>
<div class="a" style="left:257px;top:410px;width:158px;height:25px;background:linear-gradient(90deg,#fff 55%,#d6dcfa 72%,#c5cdf5)"></div>
<div class="t" style="left:267px;top:416px;font-size:13px;font-weight:700;color:#2060c8">回到首页</div>
<div class="t" style="left:328px;top:416px;font-size:13px;font-weight:700;color:#2060c8">|</div>
<div class="t" style="left:340px;top:416px;font-size:13px;font-weight:700;color:#2060c8">退出</div>
<svg class="i" style="left:393px;top:414px" width="17" height="17" viewBox="0 0 17 17"><circle cx="8" cy="9" r="8" fill="#b8c0e8"/><circle cx="7.500" cy="7.500" r="7" fill="#fff"/><path d="M7 3.500L4 6.500L7 9.500M11 3.500L8 6.500L11 9.500" fill="none" stroke="#0a3cb0" stroke-width="1.800"/></svg>

<div class="a" style="left:257px;top:449px;width:157px;height:125px;background:linear-gradient(90deg,#fff 67px,#f9fbff 67px,#f9fbff 82px,#f3f6ff 82px,#f3f6ff 95px,#e9eefe 95px,#e9eefe 110px,#e1e8fd 110px,#e1e8fd 119px,#cfd8f8 119px)"></div>
<div class="a" style="left:257px;top:574px;width:158px;height:54px;background:#d6dcf6"></div>
<div class="a" style="left:257px;top:643px;width:157px;height:234px;background:linear-gradient(90deg,#fff 67px,#f9fbff 67px,#f9fbff 82px,#f3f6ff 82px,#f3f6ff 95px,#e9eefe 95px,#e9eefe 110px,#e1e8fd 110px,#e1e8fd 119px,#cfd8f8 119px)"></div>

<div class="t side" style="top:455px">系统管理</div>
<div class="t side" style="top:480px">企业信息</div>
<div class="t side" style="top:505px">产品管理</div>
<div class="t side" style="top:530px">订单管理</div>
<div class="t side" style="top:555px">下载中心</div>
<svg class="i" style="left:392px;top:452px" width="17" height="17"><use href="#chev"/></svg>
<svg class="i" style="left:392px;top:477px" width="17" height="17"><use href="#chev"/></svg>
<svg class="i" style="left:392px;top:502px" width="17" height="17"><use href="#chev"/></svg>
<svg class="i" style="left:392px;top:527px" width="17" height="17"><use href="#chev"/></svg>
<svg class="i" style="left:392px;top:552px" width="17" height="17"><use href="#chev"/></svg>
<div class="t sub" style="top:576px">添加下载程序</div>
<div class="t sub" style="top:593px">管理下载程序</div>
<div class="t sub" style="top:610px">下载程序类别</div>

<div class="t side" style="top:649px">会员管理</div>
<div class="t side" style="top:674px">新闻管理</div>
<div class="t side" style="top:699px">留言管理</div>
<div class="t side" style="top:724px">荣誉管理</div>
<div class="t side" style="top:749px">访问统计</div>
<div class="t side" style="top:774px">营销网络</div>
<div class="t side" style="top:799px">人才管理</div>
<div class="t side" style="top:824px">调查管理</div>
<div class="t side" style="top:849px">邮件列表</div>
<svg class="i" style="left:392px;top:646px" width="17" height="17"><use href="#chev"/></svg>
<svg class="i" style="left:392px;top:671px" width="17" height="17"><use href="#chev"/></svg>
<svg class="i" style="left:392px;top:696px" width="17" height="17"><use href="#chev"/></svg>
<svg class="i" style="left:392px;top:721px" width="17" height="17"><use href="#chev"/></svg>
<svg class="i" style="left:392px;top:746px" width="17" height="17"><use href="#chev"/></svg>
<svg class="i" style="left:392px;top:771px" width="17" height="17"><use href="#chev"/></svg>
<svg class="i" style="left:392px;top:796px" width="17" height="17"><use href="#chev"/></svg>
<svg class="i" style="left:392px;top:821px" width="17" height="17"><use href="#chev"/></svg>
<svg class="i" style="left:392px;top:846px" width="17" height="17"><use href="#chev"/></svg>
<div class="a" style="left:257px;top:875px;width:157px;height:2px;overflow:hidden"><div class="t side" style="left:9px;top:0;margin-top:-1px">客服管理</div></div>
<div class="a" style="left:392px;top:871px;width:17px;height:6px;overflow:hidden"><svg class="i" style="left:0;top:0" width="17" height="17"><use href="#chev"/></svg></div>

<!-- form table -->
<div class="a" style="left:584px;top:389px;width:745px;height:459px;background:#eff7ff;border:1px solid #a8b8da;border-top:0"></div>
<div class="a" style="left:699px;top:389px;width:1px;height:427px;background:#a8b8da"></div>
<div class="a" style="left:584px;top:647px;width:745px;height:1px;background:#a8b8da"></div>
<div class="a" style="left:584px;top:673px;width:745px;height:1px;background:#a8b8da"></div>
<div class="a" style="left:584px;top:699px;width:745px;height:1px;background:#a8b8da"></div>
<div class="a" style="left:584px;top:729px;width:745px;height:1px;background:#a8b8da"></div>
<div class="a" style="left:584px;top:759px;width:745px;height:1px;background:#a8b8da"></div>
<div class="a" style="left:584px;top:785px;width:745px;height:1px;background:#a8b8da"></div>
<div class="a" style="left:584px;top:816px;width:745px;height:1px;background:#a8b8da"></div>
<div class="a" style="left:970px;top:699px;width:1px;height:60px;background:#a8b8da"></div>

<!-- editor -->
<div class="a" style="left:702px;top:389px;width:625px;height:256px;background:#ddd;border-right:2px solid #aaa;border-bottom:2px solid #aaa;border-left:2px solid #111"></div>
<div class="a" style="left:703px;top:389px;width:306px;height:123px;background:#fff;border-left:3px solid #000;border-right:2px solid #aaa;border-bottom:2px solid #aaa"></div>
<div class="ed" style="left:1017px;width:60px;background:#f2eef0;border-color:#999 #fff #fff #999;padding-left:19px">编　辑</div>
<div class="ed" style="left:1084px;width:59px;padding-left:17px">源代码</div>
<div class="ed" style="left:1151px;width:59px;padding-left:18px">预　览</div>
<svg class="i" style="left:1018px;top:493px" width="16" height="18" viewBox="0 0 16 18"><rect x=".5" y=".5" width="13" height="17" fill="#f4f6fc" stroke="#4a68a8"/><path d="M12 1L15 3L6 15L3 16L4 13Z" fill="#e0a020" stroke="#553"/></svg>
<svg class="i" style="left:1085px;top:493px" width="16" height="18" viewBox="0 0 16 18"><rect x=".5" y=".5" width="13" height="17" fill="#f4f6fc" stroke="#4a68a8"/><path d="M6 6L3 9L6 12M8 6L11 9L8 12" fill="none" stroke="#1a70c8" stroke-width="1.500"/></svg>
<svg class="i" style="left:1152px;top:493px" width="17" height="18" viewBox="0 0 17 18"><rect x=".5" y=".5" width="13" height="17" fill="#f4f6fc" stroke="#4a68a8"/><circle cx="7" cy="10" r="4.500" fill="#3a90a0"/><path d="M11 13L15 17" stroke="#e07a18" stroke-width="2"/></svg>

<!-- labels -->
<div class="t lab" style="top:652px"><b>*</b>适用系统:</div>
<div class="t lab" style="top:678px"><b>*</b>软件类型:</div>
<div class="t lab" style="top:705px">产品图片:</div>
<div class="t lab" style="top:736px"><b>*</b>下载地址:</div>
<div class="t lab" style="top:763px"><b>*</b>文件大小:</div>
<div class="t lab" style="top:793px">录入时间:</div>

<div class="in" style="top:650px"></div>
<div class="in" style="top:676px"></div>
<div class="in" style="top:704px"></div>
<div class="in" style="top:734px"></div>
<div class="in" style="top:762px"></div>
<div class="in" style="top:791px;width:154px"></div>
<div class="t m" style="left:706px;top:653px;font-size:11.700px;color:#111">Win98, Win2000, WinXP</div>
<div class="t" style="left:706px;top:679px;font-size:13px;color:#111">产品驱动</div>
<div class="t m" style="left:706px;top:794px;font-size:11.700px;color:#111">2014/2/13 19:15:33</div>
<div class="t m" style="left:932px;top:765px;font-size:11px;color:#111">K</div>

<!-- upload frames -->
<div class="a" style="left:973px;top:702px;width:320px;height:25px;background:#e6f5ed;overflow:hidden">
 <div class="a" style="left:11px;top:12px;width:222px;height:13px;background:#a9a9a9"></div>
 <div class="t" style="left:0;top:12px;font-size:13px;color:#111">M<span style="color:#f2f2f2">icrosoft VBScript 运行时错误 '800a005</span>e'</div>
</div>
<div class="a" style="left:973px;top:732px;width:320px;height:25px;background:#e6f5ed;overflow:hidden">
 <div class="t" style="left:0;top:12px;font-size:13px;color:#111">Microsoft VBScript 运行时错误 '800a005e'</div>
</div>
<svg class="i" style="left:1180px;top:732px;z-index:3" width="32" height="38"><ellipse cx="15.500" cy="15.500" rx="14" ry="14.500" fill="none" stroke="#e81010" stroke-width="2.200"/><path d="M17 16V32L20.500 28.500L23.500 35L26.500 33.500L23.500 27.500H28Z" fill="#fff" stroke="#000"/></svg>

<div class="btn" style="left:896px;top:822px;width:48px;height:21px">提交</div>
<div class="btn" style="left:970px;top:822px;width:48px;height:21px">重置</div>
<div class="t m" style="left:1181px;top:856px;font-size:10.200px;color:#111;white-space:pre">Design By:  数字Net Tel:010-81991660 QQ:65961930</div>

<!-- scrollbars -->
<div class="a" style="left:1483px;top:389px;width:14px;height:496px;background:#fbfbfb"></div>
<svg class="i" style="left:1485px;top:394px" width="7" height="6"><path d="M3.500 0L7 6H0Z" fill="#444"/></svg>
<div class="a" style="left:1483px;top:565px;width:13px;height:301px;background:linear-gradient(90deg,#e4e4e4,#fdfdfd 50%,#d8d8d8);border:1px solid #bbb;border-radius:2px"></div>
<div class="a" style="left:1486px;top:712px;width:6px;height:7px;background:repeating-linear-gradient(#888 0 1px,#f4f4f4 1px 3px)"></div>
<svg class="i" style="left:1485px;top:872px" width="7" height="6"><path d="M0 0H7L3.500 6Z" fill="#444"/></svg>
<div class="a" style="left:433px;top:885px;width:1050px;height:15px;background:#eee"></div>
<svg class="i" style="left:438px;top:888px" width="6" height="8"><path d="M6 0V8L0 4Z" fill="#999"/></svg>
<svg class="i" style="left:1470px;top:888px" width="6" height="8"><path d="M0 0V8L6 4Z" fill="#777"/></svg>

<!-- status bar -->
<div class="a" style="left:243px;top:909px;width:1262px;height:27px;background:#f5eded;border-top:2px solid #a8a8a8"></div>
<div class="a" style="left:243px;top:935px;width:1262px;height:1px;background:#fff"></div>
<svg class="i" style="left:244px;top:913px" width="17" height="17" viewBox="0 0 17 17"><path d="M0 9L5 5L11 5L14 0L15 5L17 9L13 15L6 13L1 12Z" fill="#e0702a"/><circle cx="12" cy="8" r="1" fill="#222"/><path d="M7 9L13 9L10 14Z" fill="#fff"/></svg>
<div class="sep" style="left:261px"></div>
<div class="t" style="left:268px;top:914px;color:#111">完成</div>
<div class="sep" style="left:1160px"></div><div class="sep" style="left:1184px"></div><div class="sep" style="left:1197px"></div><div class="sep" style="left:1225px"></div><div class="sep" style="left:1275px"></div><div class="sep" style="left:1325px"></div><div class="sep" style="left:1389px"></div><div class="sep" style="left:1460px"></div><div class="sep" style="left:1489px"></div>
<svg class="i" style="left:1164px;top:914px" width="16" height="17" viewBox="0 0 16 17"><circle cx="8" cy="8" r="7" fill="#3a9ad0"/><path d="M3 5L12 4L9 8L13 12L6 13Z" fill="#48b048"/><path d="M8 10L11 16L14 13" fill="#f0a030"/></svg>
<div class="t" style="left:1186px;top:917px;width:9px;height:10px;line-height:10px;background:#f0e080;font-size:7px;font-weight:700;text-align:center;color:#554">P</div>
<div class="t" style="left:1204px;top:914px;width:16px;height:16px;background:#10a0e8;border-radius:3px;color:#fff;font-size:13px;line-height:15px;text-align:center">@</div>
<div class="t" style="left:1228px;top:911px;font-size:10px;color:#111;letter-spacing:.1px">PageRank</div>
<div class="t" style="left:1288px;top:911px;font-size:10px;color:#111">Alexa</div>
<div class="t" style="left:1337px;top:914px;font-size:13px;color:#111">NetBox</div>
<div class="t" style="left:1400px;top:914px;font-size:13px;color:#f00">127.0.0.1</div>
<svg class="i" style="left:1468px;top:915px" width="16" height="14" viewBox="0 0 16 14"><path d="M0 8L8 2L15 0L13 8L8 12L5 14L2 11Z" fill="#777"/></svg>
<svg class="i" style="left:1495px;top:925px" width="9" height="9"><path d="M7 1h1v1H7zM4 4h1v1H4zM7 4h1v1H7zM1 7h1v1H1zM4 7h1v1H4zM7 7h1v1H7z" fill="#999"/></svg>

<!-- taskbar -->
<div class="a" style="left:0;top:1041px;width:1680px;height:9px;background:linear-gradient(90deg,#a9c3e2 0,#a9c3e2 1240px,#7f95b0 1290px,#7f95b0 100%);border-top:1px solid #3a4a5c"></div>
<div class="a" style="left:0;top:1041px;width:2px;height:9px;background:#eee"></div>
<div class="t" style="left:1614px;top:1043px;color:#fff;font-size:12px">19:16</div>
<div class="a" style="left:1666px;top:1041px;width:14px;height:9px;background:#9aa5b4;border:1px solid #555"></div>

<!-- control window -->
<div class="a" style="left:1384px;top:940px;width:282px;height:102px;background:#f0f0f0;z-index:6">
 <div class="a" style="left:0;top:0;width:282px;height:26px;background:#25395a"></div>
 <div class="t" style="left:4px;top:5px;font-size:12px;color:#f0f0f0">控制</div>
 <div class="a" style="left:262px;top:3px;width:19px;height:19px;background:#c75050;color:#fff;text-align:center;font-size:12px;font-weight:700;line-height:17px">x</div>
 <div class="a" style="left:0;top:26px;width:282px;height:1px;background:#fff"></div>
 <div class="a" style="left:0;top:53px;width:282px;height:2px;background:#b4b4b4"></div>
</div>
<div style="position:absolute;left:0;top:0;z-index:7">
 <div class="cb" style="left:1394px;width:18px"><div class="a" style="left:0;top:0;width:14px;height:18px;border:2px solid #0ff;background:#ddd"></div><svg class="i" style="left:4px;top:4px" width="8" height="10"><path d="M1 0L7 5L1 10Z" fill="#000"/></svg></div>
 <div class="cb" style="left:1416px;width:22px"><div class="a" style="left:1px;top:0;width:16px;height:18px;border:2px solid #0ff;background:#ddd"></div><div class="a" style="left:5px;top:5px;width:8px;height:8px;background:#000"></div></div>
 <div class="cb" style="left:1440px;width:22px"><div class="a" style="left:1px;top:1px;width:16px;height:16px;border:3px solid #999"></div><svg class="i" style="left:5px;top:5px" width="9" height="8"><path d="M0 0L4 4L0 8ZM4 0L8 4L4 8Z" fill="#999"/></svg></div>
 <div class="cb" style="left:1470px;width:21px"><div class="a" style="left:1px;top:1px;width:15px;height:16px;border:1px solid #000;background:linear-gradient(#00f 30%,#fff 30%)"></div><div class="a" style="left:3px;top:9px;width:11px;height:1px;background:#000"></div></div>
 <div class="cb" style="left:1493px;width:22px;border-color:#808080 #fff #fff #808080"><div class="a" style="left:4px;top:4px;width:10px;height:10px;border:1px solid #000;background:linear-gradient(#00f 40%,#fff 40%)"></div><div class="a" style="left:1px;top:1px;width:16px;height:16px;border:1px dashed #000"></div></div>
 <div class="cb" style="left:1532px;width:35px">菜单</div>
 <div class="cb" style="left:1575px;width:35px;color:#999">多节</div>
 <div class="cb" style="left:1626px;width:35px">定位</div>
 <div class="a" style="left:1386px;top:1002px;width:274px;height:5px;background:#00f"></div>
 <div class="a" style="left:1385px;top:1008px;width:276px;height:4px;background:repeating-linear-gradient(90deg,#f00 0 2px,transparent 2px 10.850px)"></div>
 <div class="a" style="left:1461px;top:998px;width:2px;height:15px;background:#f00"></div>
 <div class="t" style="left:1432px;top:1022px;font-size:15.500px;line-height:20px;color:rgba(160,160,160,.45)">https://blog.csdn.net/qq_36669990</div>
 <div class="t m" style="left:1386px;top:1024px;font-size:11.700px;letter-spacing:.2px;color:#00f">帧:1266/4560</div>
 <div class="t m" style="left:1475px;top:1024px;font-size:11.700px;letter-spacing:.2px;color:#00f">时间:7:1/25:18</div>
 <div class="a" style="left:1610px;top:1028px;width:54px;height:7px;border:1px solid #0a0;background:repeating-linear-gradient(90deg,#0a0 0 3px,transparent 3px 5px) center/100% 1px no-repeat"></div>
 <div class="a" style="left:1615px;top:1026px;width:4px;height:10px;background:#080"></div>
</div>
</body></html>
